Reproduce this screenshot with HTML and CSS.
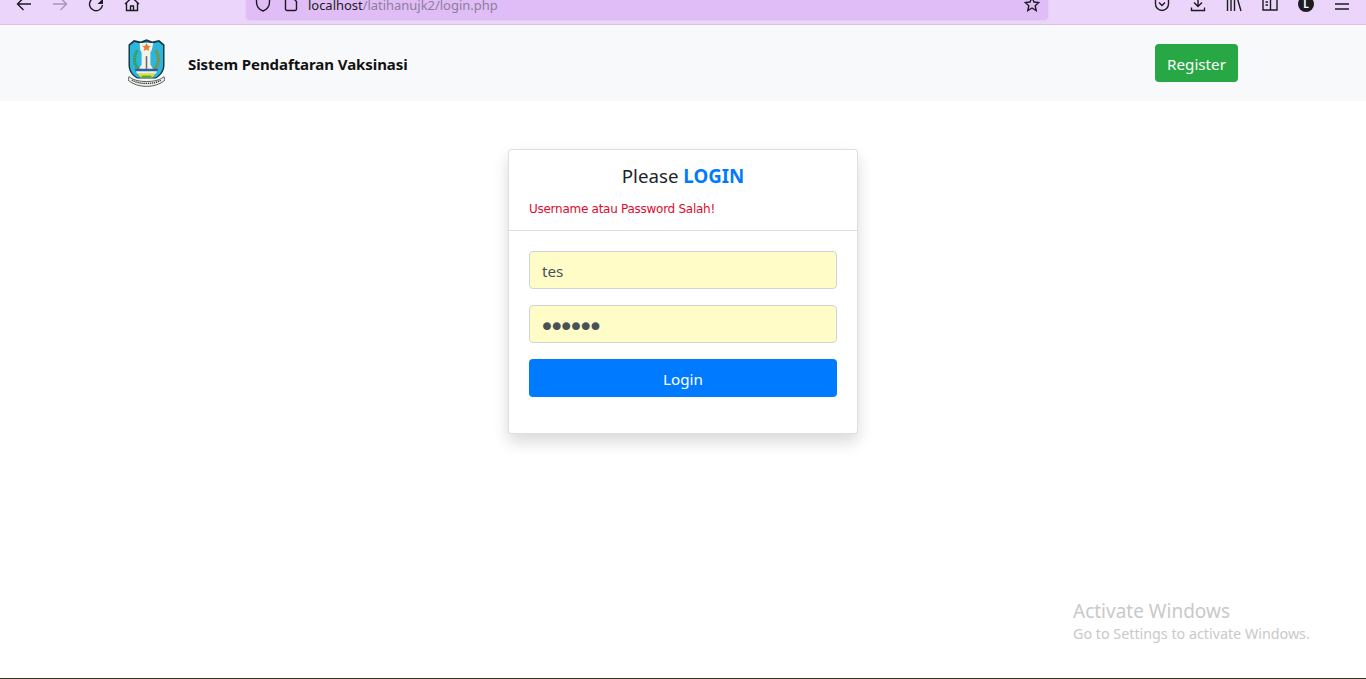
FILE: index.html
```html
<!DOCTYPE html>
<html lang="id">
<head>
<meta charset="utf-8">
<title>Login</title>
<link rel="stylesheet" href="styles.css">
</head>
<body>
<div class="page">
  <header class="toolbar">
    <div class="nav-group">
      <svg class="icon" viewBox="0 0 16 16"><path d="M15 8H1.500M7.500 2 1.500 8l6 6"/></svg>
      <svg class="icon icon-off" viewBox="0 0 16 16"><path d="M1 8h13.500M8.500 2l6 6-6 6"/></svg>
      <svg class="icon" viewBox="0 0 16 16"><path d="M12.500 3.500A6.500 6.500 0 1 0 14.500 9"/><path class="fill" d="M15 2.500V8H9.500z"/></svg>
      <svg class="icon" viewBox="0 0 16 16"><path d="M1 8 8 1.500 15 8M2.500 7v7.500h11V7M6.500 14.500V10h3v4.500"/></svg>
    </div>
    <div class="urlbar">
      <svg class="icon" viewBox="0 0 16 16"><path d="M8 15C4 13.500 1.500 10 1.500 6V2.500L8 1l6.500 1.500V6c0 4-2.500 7.500-6.500 9z"/></svg>
      <svg class="icon icon-page" viewBox="0 0 14 16"><path d="M1.500 1.500h7l4 4v7.500a1.500 1.500 0 0 1-1.500 1.500H3A1.500 1.500 0 0 1 1.500 13z"/></svg>
      <span class="url"><span class="url-host">localhost</span>/latihanujk2/login.php</span>
      <svg class="icon icon-star" viewBox="0 0 16 16"><path d="M8 1.500 10 6l4.800.5-3.600 3.200 1 4.800L8 12l-4.200 2.500 1-4.800L1.200 6.500 6 6z"/></svg>
    </div>
    <div class="tool-group">
      <svg class="icon" viewBox="0 0 16 16"><path d="M1.500 2.500h13V8a6.500 6.500 0 0 1-13 0z"/><path d="M5 6.500 8 9.500l3-3"/></svg>
      <svg class="icon" viewBox="0 0 16 16"><path d="M8 1v9.500M4 6.500l4 4 4-4M1.500 11.500v3h13v-3"/></svg>
      <svg class="icon" viewBox="0 0 16 16"><path d="M1.500 1v14M5 1v14M8.500 1v14M11 1l4 14"/></svg>
      <svg class="icon" viewBox="0 0 16 16"><path d="M1 2h14v12H1zM8.500 2v12M3.500 6H6M3.500 9H6"/></svg>
      <span class="avatar">L</span>
      <svg class="icon" viewBox="0 0 16 16"><path d="M1 3h14M1 8h14M1 13h14"/></svg>
    </div>
  </header>

  <nav class="navbar">
    <div class="brand">
      <svg class="logo" viewBox="0 0 38 50">
        <path d="M.5 6 6 1.500 13 3l6-2.500L25 3l7-1.500L37.500 6v21c0 7-4 11-9 14H9.500c-5-3-9-7-9-14z" fill="#17394a"/>
        <path d="M2 7l4.500-3.500 6.500 1.500 6-2 6 2 6.500-1.500L36 7v20c0 6-3.500 10-8 13H10c-4.500-3-8-7-8-13z" fill="#2cb6dd"/>
        <path d="M12 4.500h14l-1.500 7-1.500 3v12l3 5H11l3-5v-12l-1.500-3z" fill="#f3f1ea"/>
        <path d="M19 4.500l1.400 2.800 3 .3-2.200 2 .6 3-2.800-1.500-2.800 1.500.6-3-2.200-2 3-.3z" fill="#e2813a"/>
        <path d="M18.200 18h1.600v13h-1.600z" fill="#6a6a66"/>
        <path d="M9.500 12C5 20 6 28 13 33" fill="none" stroke="#3d9a3a" stroke-width="3" stroke-dasharray="2 .7"/>
        <path d="M28.500 12C33 20 32 28 25 33" fill="none" stroke="#8f8a25" stroke-width="3" stroke-dasharray="2 .7"/>
        <path d="M7 31h24l-1 3H8z" fill="#2d5fa8"/>
        <path d="M8 33.500h22l-1.500 2.500H9.500z" fill="#eef0d8"/>
        <path d="M10 36h18l-3 4H13z" fill="#e8dc2c"/>
        <path d="M14 38h10v2H14z" fill="#4fa63f"/>
        <path d="M1 39c5 4 11 5 18 5s13-1 18-5l1 3.500c-5 4.500-12 6.500-19 6.500S5 47 0 42.500z" fill="#ecece4" stroke="#4a4a4a" stroke-width=".9"/>
        <path d="M4 42.500c4 2.500 9 3.500 15 3.500s11-1 15-3.500" fill="none" stroke="#333" stroke-width="1.300" stroke-dasharray="1.300 .8"/>
      </svg>
      <span class="brand-name">Sistem Pendaftaran Vaksinasi</span>
    </div>
    <a class="btn btn-register" href="#">Register</a>
  </nav>

  <main class="content">
    <section class="card">
      <div class="card-header">
        <h1 class="card-title">Please <b class="accent">LOGIN</b></h1>
        <p class="error">Username atau Password Salah!</p>
      </div>
      <form class="card-body">
        <input class="field" type="text" value="tes" aria-label="Username">
        <input class="field field-pass" type="password" value="secret" aria-label="Password">
        <button class="btn btn-login" type="button">Login</button>
      </form>
    </section>
  </main>

  <div class="bottom-line"></div>
  <aside class="watermark">
    <div class="wm-title">Activate Windows</div>
    <div class="wm-sub">Go to Settings to activate Windows.</div>
  </aside>
</div>
</body>
</html>
```
FILE: styles.css
```css
* { box-sizing: border-box; }
html, body { margin: 0; height: 100%; overflow: hidden; }
body { font-family: "Noto Sans", "Open Sans", sans-serif; color: #212529; background: #fff; }

.page { position: relative; height: 679px; display: flex; flex-direction: column; }

/* browser chrome */
.toolbar {
  flex: none; height: 25px; display: flex; align-items: flex-start;
  background: #ecd5fb; border-bottom: 1px solid #d9bfe9; overflow: hidden;
}
.icon {
  flex: none; width: 16px; height: 16px; margin-top: -4px;
  fill: none; stroke: #1c1b22; stroke-width: 1.400;
}
.icon .fill { fill: #1c1b22; stroke: none; }
.icon-off { stroke: #a895b3; }
.nav-group { flex: none; width: 246px; padding-left: 16px; display: flex; gap: 20px; }
.urlbar {
  flex: none; width: 802px; height: 32px; margin-top: -13px; padding: 13px 8px 0 9px;
  display: flex; align-items: flex-start; background: #e0bdf6; border-radius: 4px;
  box-shadow: 0 1px 2px rgba(120, 80, 150, .2);
}
.urlbar .icon { margin-top: -4px; }
.icon-page { width: 14px; margin-left: 13px; }
.url { margin-left: 10px; margin-top: -5px; font-size: 13px; line-height: 20px; letter-spacing: -.03px; color: #8f7d9c; white-space: nowrap; }
.url-host { color: #1c1b22; }
.icon-star { margin-left: auto; }
.tool-group { flex: 1; padding-left: 106px; display: flex; gap: 20px; }
.avatar {
  flex: none; width: 16px; height: 16px; margin-top: -4px; border-radius: 50%;
  background: #1c1b22; color: #fff; font-size: 10px; font-weight: 700;
  line-height: 16px; text-align: center;
}

/* page navbar */
.navbar {
  flex: none; height: 76px; padding: 0 128px; display: flex; align-items: center;
  justify-content: space-between; background: #f8f9fa;
}
.brand { display: flex; align-items: center; gap: 23px; }
.logo { width: 37px; height: 50px; display: block; filter: blur(.4px); }
.brand-name { padding-top: 2px; font-size: 15px; font-weight: 700; letter-spacing: -.07px; color: #111; }

.btn {
  display: block; height: 38px; border: 0; border-radius: 4px; color: #fff;
  font: 400 15.200px/40px "Noto Sans", sans-serif; text-align: center; text-decoration: none;
}
.btn-register { width: 83px; background: #28a745; }
.btn-login { width: 100%; padding: 0; background: #007bff; }

/* login card */
.content { flex: 1; padding-top: 48px; display: flex; justify-content: center; align-items: flex-start; }
.card {
  width: 350px; height: 285px; background: #fff; border: 1px solid rgba(0, 0, 0, .125);
  border-radius: 4px; box-shadow: 0 8px 16px rgba(0, 0, 0, .15);
}
.card-header { height: 81px; padding: 12px 20px 0; border-bottom: 1px solid rgba(0, 0, 0, .125); }
.card-title { margin: 0; font-size: 18.700px; font-weight: 400; line-height: 28px; text-align: center; }
.accent { color: #007bff; }
.error { margin: 10px 0 0; font: 12px/18px "DejaVu Sans", sans-serif; color: #dd0b2e; letter-spacing: -.27px; }
.card-body { padding: 20px; display: flex; flex-direction: column; gap: 16px; }
.field {
  display: block; width: 100%; height: 38px; padding: 2px 12px 0; background: #fffcc8;
  border: 1px solid #ced4da; border-radius: 4px; color: #495057;
  font: 400 15.200px "Noto Sans", sans-serif;
}
.field-pass { padding: 4px 9px 0; font: 400 27px "DejaVu Sans", sans-serif; letter-spacing: -6.250px; }

.bottom-line { flex: none; height: 1px; background: #2f2f1f; }

/* OS overlay */
.watermark { position: absolute; left: 1073px; top: 599px; color: #c9c9c9; white-space: nowrap; pointer-events: none; }
.wm-title { font-size: 19px; line-height: 25px; }
.wm-sub { font-size: 14.300px; line-height: 20px; }
```
